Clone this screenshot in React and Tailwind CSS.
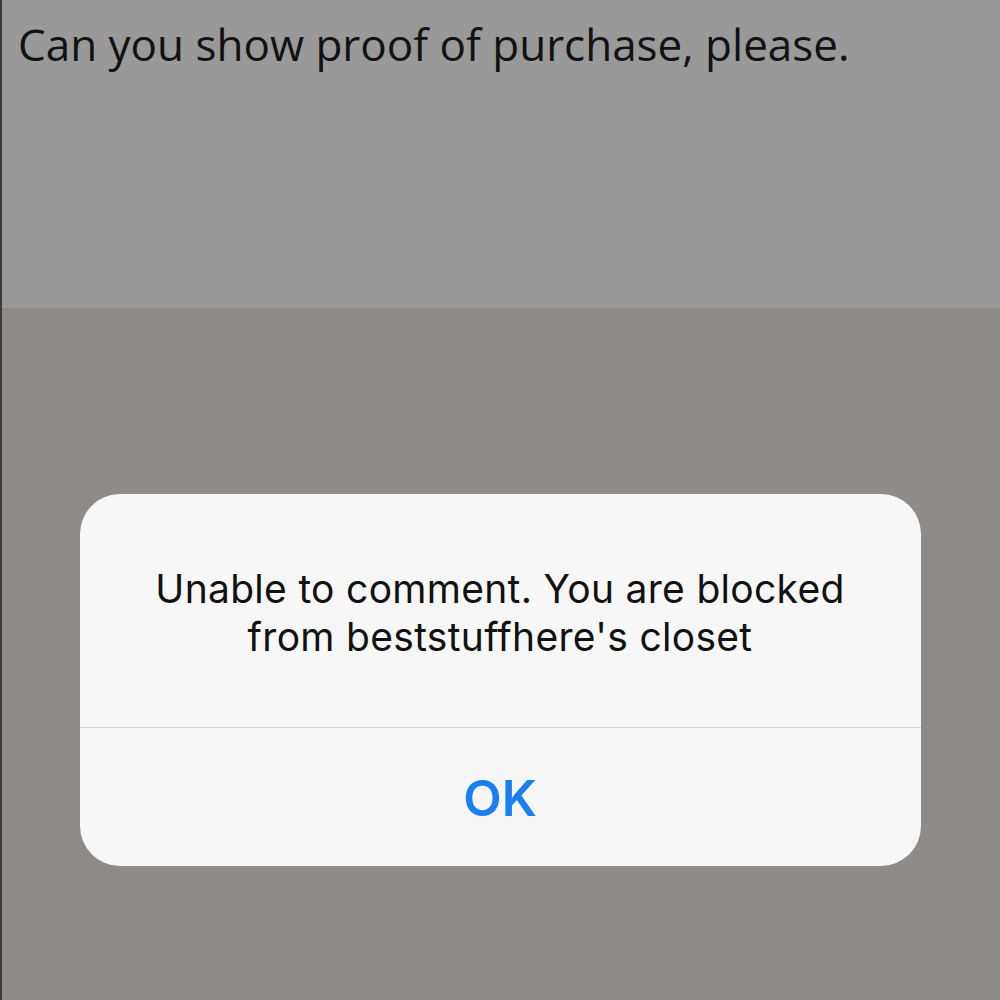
import React from 'react';

const AlertDialog = ({ message, action }) => (
  <div className="w-[841px] h-[372px] flex flex-col rounded-[40px] bg-[#f7f7f7] overflow-hidden">
    <div className="h-[233px] flex items-center justify-center px-8">
      <p className="text-center text-[39px] leading-[48px] text-[#111] pt-[4px] tracking-[0.3px]" style={{ fontFamily: 'Inter, sans-serif' }}>
        {message}
      </p>
    </div>
    <div className="h-px bg-[#d4d4d6]" />
    <button className="flex-1 w-full flex items-center justify-center text-[50px] font-semibold text-[#1a7ff3] pt-[2px]" style={{ fontFamily: 'Inter, sans-serif' }}>
      {action}
    </button>
  </div>
);

export default function App() {
  return (
    <div className="w-[1000px] h-[1000px] flex flex-col border-l-2 border-[#3a3a3a] overflow-hidden">
      <div className="h-[310px] shrink-0 bg-[#999999] border-b-2 border-[#8a8a8a] pl-4 pt-[16px]">
        <p className="text-[44px] leading-[56px] text-[#121212]" style={{ fontFamily: '"Open Sans", sans-serif' }}>
          Can you show proof of purchase, please.
        </p>
      </div>
      <div className="flex-1 bg-[#8e8b88] flex items-start justify-center pt-[184px] pr-[2px]">
        <AlertDialog
          message={<>Unable to comment. You are blocked<br />from beststuffhere's closet</>}
          action="OK"
        />
      </div>
    </div>
  );
}
